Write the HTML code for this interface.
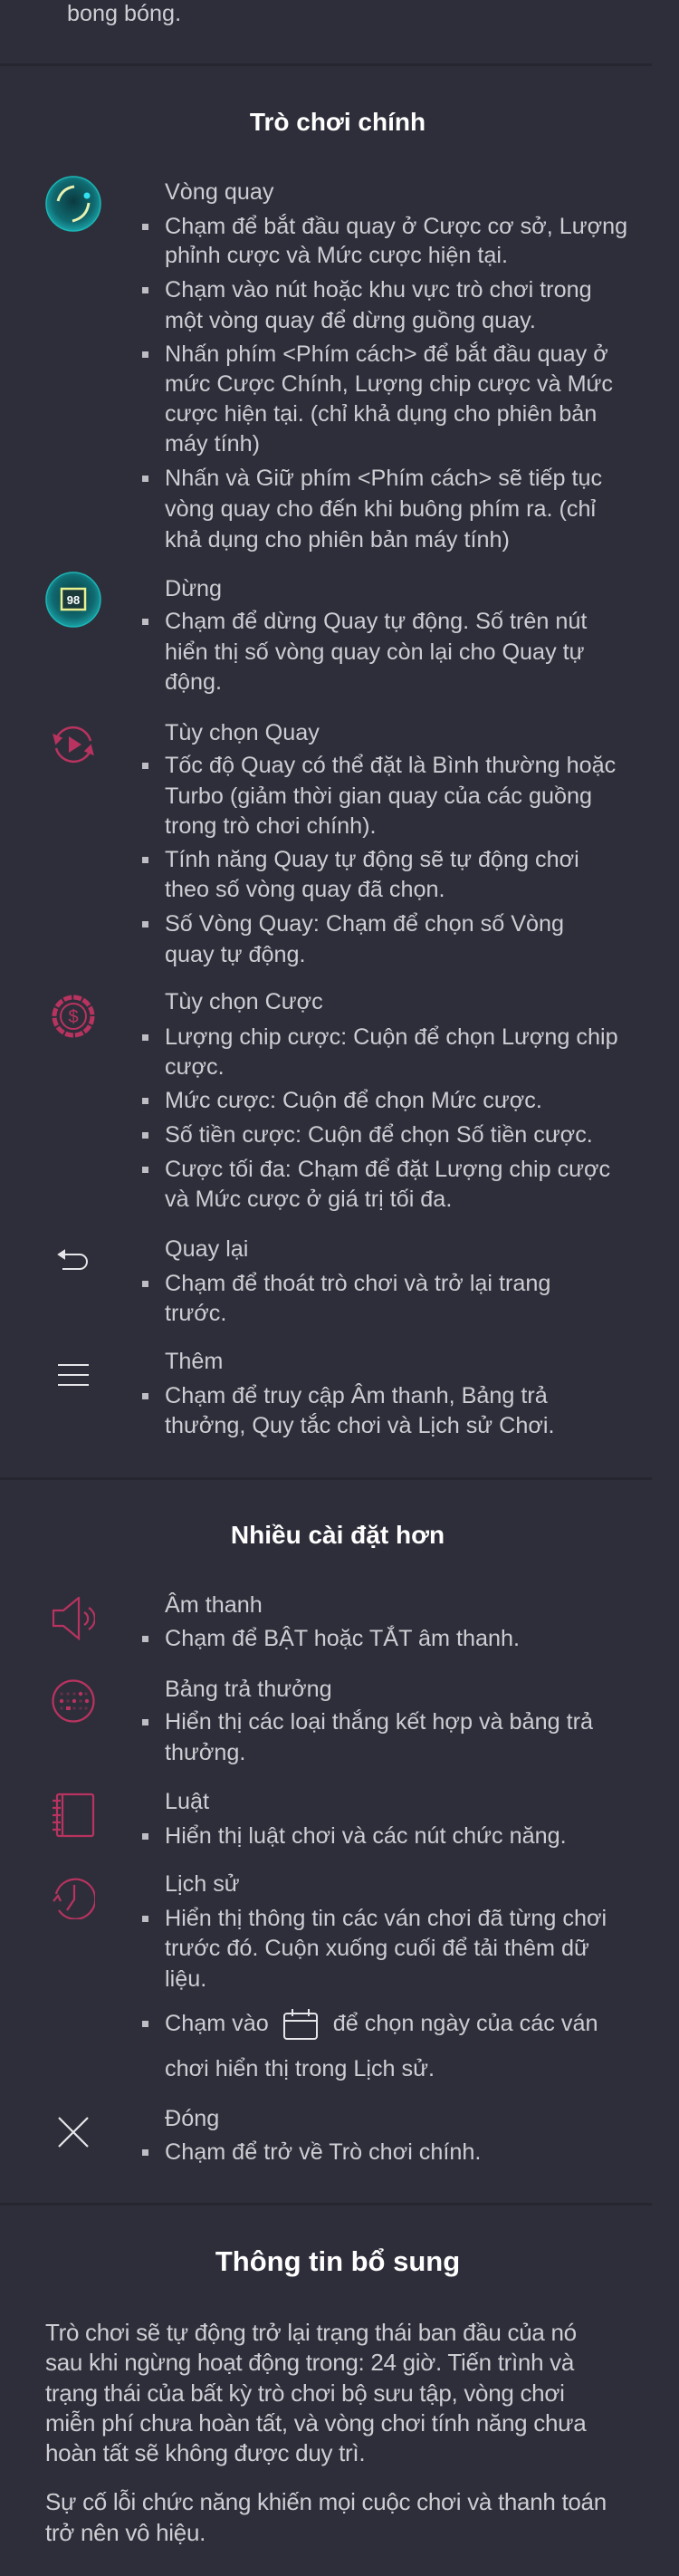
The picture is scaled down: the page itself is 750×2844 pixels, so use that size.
<!DOCTYPE html>
<html><head><meta charset="utf-8">
<style>
html,body{margin:0;padding:0}
body{width:750px;height:2844px;background:#2e2e3a;position:relative;overflow:hidden;font-family:"Liberation Sans","DejaVu Sans",sans-serif;color:#cdcdd3}
.l{position:absolute;left:182px;height:34px;line-height:34px;font-size:25.2px;white-space:nowrap}
.b::before{content:"";position:absolute;left:-25px;top:14px;width:7px;height:7px;background:#bdbdc3}
.h{position:absolute;left:0;width:746px;text-align:center;font-weight:bold;font-size:28px;color:#fff;line-height:36px}
.sep{position:absolute;left:0;width:720px;height:3px;background:#262630}
.ic{position:absolute}
.p{position:absolute;left:50px;height:34px;line-height:34px;font-size:26px;letter-spacing:-0.3px;white-space:nowrap}
</style></head><body>
<div class="l" style="left:74px;top:-2px">bong bóng.</div>
<div class="sep" style="top:70px"></div>
<div class="h" style="top:117px">Trò chơi chính</div>

<svg class="ic" style="left:50px;top:194px" width="62" height="62" viewBox="0 0 62 62">
<defs><radialGradient id="g1" cx="50%" cy="45%" r="55%"><stop offset="0" stop-color="#0a3a40"/><stop offset=".7" stop-color="#0f6a70"/><stop offset="1" stop-color="#1aa0a5"/></radialGradient></defs>
<circle cx="31" cy="31" r="30" fill="url(#g1)" stroke="#1bb5b5" stroke-width="1.5"/>
<path d="M14 28 Q18 14 32 12" stroke="#e9f0b0" stroke-width="3" fill="none"/>
<path d="M48 30 Q46 46 30 50" stroke="#e9f0b0" stroke-width="3" fill="none"/>
<circle cx="46" cy="22" r="3.5" fill="#33e0f0"/>
</svg>
<div class="l" style="top:195px">Vòng quay</div>
<div class="l b" style="top:233px">Chạm để bắt đầu quay ở Cược cơ sở, Lượng</div>
<div class="l" style="top:265px">phỉnh cược và Mức cược hiện tại.</div>
<div class="l b" style="top:303px">Chạm vào nút hoặc khu vực trò chơi trong</div>
<div class="l" style="top:337px">một vòng quay để dừng guồng quay.</div>
<div class="l b" style="top:374px">Nhấn phím &lt;Phím cách&gt; để bắt đầu quay ở</div>
<div class="l" style="top:407px">mức Cược Chính, Lượng chip cược và Mức</div>
<div class="l" style="top:440px">cược hiện tại. (chỉ khả dụng cho phiên bản</div>
<div class="l" style="top:473px">máy tính)</div>
<div class="l b" style="top:511px">Nhấn và Giữ phím &lt;Phím cách&gt; sẽ tiếp tục</div>
<div class="l" style="top:545px">vòng quay cho đến khi buông phím ra. (chỉ</div>
<div class="l" style="top:579px">khả dụng cho phiên bản máy tính)</div>

<svg class="ic" style="left:50px;top:631px" width="62" height="62" viewBox="0 0 62 62">
<circle cx="31" cy="31" r="30" fill="url(#g1)" stroke="#1bb5b5" stroke-width="1.5"/>
<rect x="18" y="19" width="26" height="23" fill="#1b3a3a" stroke="#e8f090" stroke-width="2.5"/>
<text x="31" y="36" text-anchor="middle" font-family="Liberation Sans" font-weight="bold" font-size="13" fill="#fff">98</text>
</svg>
<div class="l" style="top:633px">Dừng</div>
<div class="l b" style="top:669px">Chạm để dừng Quay tự động. Số trên nút</div>
<div class="l" style="top:703px">hiển thị số vòng quay còn lại cho Quay tự</div>
<div class="l" style="top:736px">động.</div>

<svg class="ic" style="left:57px;top:798px" width="48" height="48" viewBox="0 0 48 48" fill="none" stroke="#b8335f" stroke-width="2.5">
<path d="M5 18 A20 20 0 0 1 43 20"/><path d="M43 30 A20 20 0 0 1 5 28"/>
<path d="M3 14 L5 22 L10 17Z" fill="#b8335f"/><path d="M45 34 L43 26 L38 31Z" fill="#b8335f"/>
<path d="M19 15 L33 24 L19 33Z" fill="#b8335f" stroke="none"/>
</svg>
<div class="l" style="top:792px">Tùy chọn Quay</div>
<div class="l b" style="top:828px">Tốc độ Quay có thể đặt là Bình thường hoặc</div>
<div class="l" style="top:862px">Turbo (giảm thời gian quay của các guồng</div>
<div class="l" style="top:895px">trong trò chơi chính).</div>
<div class="l b" style="top:932px">Tính năng Quay tự động sẽ tự động chơi</div>
<div class="l" style="top:965px">theo số vòng quay đã chọn.</div>
<div class="l b" style="top:1003px">Số Vòng Quay: Chạm để chọn số Vòng</div>
<div class="l" style="top:1037px">quay tự động.</div>

<svg class="ic" style="left:57px;top:1098px" width="48" height="48" viewBox="0 0 48 48" fill="none" stroke="#b8335f">
<circle cx="24" cy="24" r="21" stroke-width="5" stroke-dasharray="9 2"/>
<circle cx="24" cy="24" r="14" stroke-width="2"/>
<text x="24" y="31" text-anchor="middle" font-family="Liberation Sans" font-size="20" fill="#b8335f" stroke="none">$</text>
</svg>
<div class="l" style="top:1089px">Tùy chọn Cược</div>
<div class="l b" style="top:1128px">Lượng chip cược: Cuộn để chọn Lượng chip</div>
<div class="l" style="top:1161px">cược.</div>
<div class="l b" style="top:1198px">Mức cược: Cuộn để chọn Mức cược.</div>
<div class="l b" style="top:1236px">Số tiền cược: Cuộn để chọn Số tiền cược.</div>
<div class="l b" style="top:1274px">Cược tối đa: Chạm để đặt Lượng chip cược</div>
<div class="l" style="top:1307px">và Mức cược ở giá trị tối đa.</div>

<svg class="ic" style="left:63px;top:1379px" width="36" height="26" viewBox="0 0 36 26" fill="none" stroke="#e6e6ea" stroke-width="2">
<path d="M4 6 H25 A8 8 0 0 1 25 22 H6"/><path d="M2 6 L8 2 V10Z" fill="#e6e6ea"/>
</svg>
<div class="l" style="top:1362px">Quay lại</div>
<div class="l b" style="top:1400px">Chạm để thoát trò chơi và trở lại trang</div>
<div class="l" style="top:1433px">trước.</div>

<svg class="ic" style="left:64px;top:1505px" width="34" height="26" viewBox="0 0 34 26" stroke="#e6e6ea" stroke-width="2">
<path d="M0 2 H34 M0 13 H34 M0 24 H34"/>
</svg>
<div class="l" style="top:1486px">Thêm</div>
<div class="l b" style="top:1524px">Chạm để truy cập Âm thanh, Bảng trả</div>
<div class="l" style="top:1557px">thưởng, Quy tắc chơi và Lịch sử Chơi.</div>

<div class="sep" style="top:1631px"></div>
<div class="h" style="top:1677px">Nhiều cài đặt hơn</div>

<svg class="ic" style="left:57px;top:1763px" width="48" height="48" viewBox="0 0 48 48" fill="none" stroke="#b8335f" stroke-width="2.2">
<path d="M2 15 H13 L30 1 V46 L13 32 H2Z"/><path d="M36 17 A8 8 0 0 1 36 31"/><path d="M41 12 A14 14 0 0 1 41 36"/>
</svg>
<div class="l" style="top:1755px">Âm thanh</div>
<div class="l b" style="top:1792px">Chạm để BẬT hoặc TẮT âm thanh.</div>

<svg class="ic" style="left:57px;top:1854px" width="48" height="48" viewBox="0 0 48 48" fill="#b8335f" stroke="none">
<circle cx="24" cy="24" r="22.5" fill="none" stroke="#b8335f" stroke-width="2.2"/>
<g opacity=".4"><circle cx="11" cy="16" r="1.6"/><circle cx="18" cy="16" r="1.6"/><circle cx="25" cy="16" r="1.6"/><circle cx="18" cy="24" r="1.6"/><circle cx="32" cy="24" r="1.6"/><circle cx="11" cy="32" r="1.6"/><circle cx="25" cy="32" r="1.6"/><circle cx="32" cy="32" r="1.6"/><circle cx="38" cy="32" r="1.6"/><circle cx="38" cy="16" r="1.6"/></g>
<circle cx="32" cy="16" r="2.2"/><circle cx="11" cy="24" r="2.2"/><circle cx="25" cy="24" r="2.2"/><circle cx="39" cy="24" r="2.2"/><rect x="16" y="30" width="5" height="4"/>
</svg>
<div class="l" style="top:1848px">Bảng trả thưởng</div>
<div class="l b" style="top:1884px">Hiển thị các loại thắng kết hợp và bảng trả</div>
<div class="l" style="top:1918px">thưởng.</div>

<svg class="ic" style="left:57px;top:1979px" width="48" height="50" viewBox="0 0 48 50" fill="none" stroke="#b8335f" stroke-width="2.2">
<rect x="6" y="2" width="40" height="46" rx="2"/><path d="M12 2 V48"/>
<path d="M1 9 H10 M1 17 H10 M1 25 H10 M1 33 H10 M1 41 H10"/>
</svg>
<div class="l" style="top:1972px">Luật</div>
<div class="l b" style="top:2010px">Hiển thị luật chơi và các nút chức năng.</div>

<svg class="ic" style="left:57px;top:2071px" width="48" height="48" viewBox="0 0 48 48" fill="none" stroke="#b8335f" stroke-width="2.2">
<path d="M5 20 A22 22 0 1 1 8 38"/><path d="M2 28 L7 22 L10 28"/><path d="M25 10 V26 L17 38"/>
</svg>
<div class="l" style="top:2063px">Lịch sử</div>
<div class="l b" style="top:2101px">Hiển thị thông tin các ván chơi đã từng chơi</div>
<div class="l" style="top:2134px">trước đó. Cuộn xuống cuối để tải thêm dữ</div>
<div class="l" style="top:2168px">liệu.</div>
<div class="l b" style="top:2217px">Chạm vào <svg width="40" height="36" viewBox="0 0 40 36" style="vertical-align:middle;margin:0 16px 0 8px" fill="none" stroke="#e6e6ea" stroke-width="2"><rect x="2" y="6" width="36" height="28" rx="3"/><path d="M2 14 H38 M11 1 V9 M29 1 V9"/></svg>để chọn ngày của các ván</div>
<div class="l" style="top:2267px">chơi hiển thị trong Lịch sử.</div>

<svg class="ic" style="left:64px;top:2337px" width="34" height="34" viewBox="0 0 34 34" stroke="#e6e6ea" stroke-width="2.2">
<path d="M1 1 L33 33 M33 1 L1 33"/>
</svg>
<div class="l" style="top:2322px">Đóng</div>
<div class="l b" style="top:2359px">Chạm để trở về Trò chơi chính.</div>

<div class="sep" style="top:2432px"></div>
<div class="h" style="top:2479px;font-size:31px">Thông tin bổ sung</div>

<div class="p" style="top:2558px">Trò chơi sẽ tự động trở lại trạng thái ban đầu của nó</div>
<div class="p" style="top:2591px">sau khi ngừng hoạt động trong: 24 giờ. Tiến trình và</div>
<div class="p" style="top:2625px">trạng thái của bất kỳ trò chơi bộ sưu tập, vòng chơi</div>
<div class="p" style="top:2658px">miễn phí chưa hoàn tất, và vòng chơi tính năng chưa</div>
<div class="p" style="top:2691px">hoàn tất sẽ không được duy trì.</div>
<div class="p" style="top:2745px">Sự cố lỗi chức năng khiến mọi cuộc chơi và thanh toán</div>
<div class="p" style="top:2779px">trở nên vô hiệu.</div>
</body></html>
